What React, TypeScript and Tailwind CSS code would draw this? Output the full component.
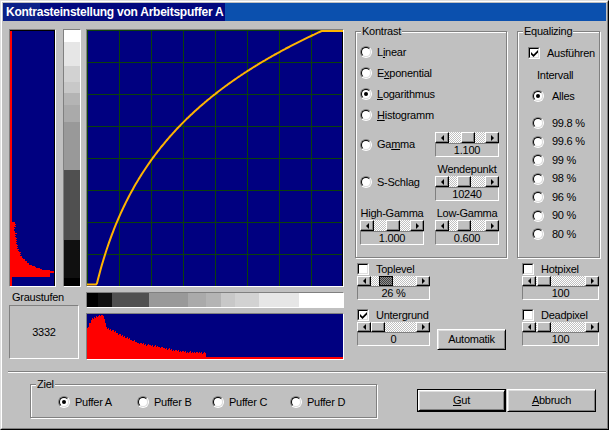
import React from "react";

const raised =
  "border border-t-white border-l-white border-r-black border-b-black shadow-[inset_-1px_-1px_0_#808080]";
const raised2 =
  "border border-t-white border-l-white border-r-black border-b-black shadow-[inset_1px_1px_0_#dfdfdf,inset_-1px_-1px_0_#808080]";
const sunken = "border border-t-[#808080] border-l-[#808080] border-r-white border-b-white";
const checker = "bg-[repeating-conic-gradient(#c0c0c0_0_25%,#ffffff_0_50%)] bg-[length:2px_2px]";

const lerp = (pts: [number, number][], x: number) => {
  for (let i = 1; i < pts.length; i++) {
    if (x <= pts[i][0]) {
      const [x0, y0] = pts[i - 1];
      const [x1, y1] = pts[i];
      return y0 + ((y1 - y0) * (x - x0)) / (x1 - x0);
    }
  }
  return pts[pts.length - 1][1];
};
const noise = (i: number) => (((i * 73 + 19) % 7) - 3) / 3;

const Radio = ({ checked }: { checked?: boolean }) => (
  <span className="flex size-3 shrink-0 rounded-full border border-t-[#808080] border-l-[#808080] border-r-white border-b-white">
    <span className="flex flex-1 items-center justify-center rounded-full border border-t-black border-l-black border-r-[#dfdfdf] border-b-[#dfdfdf] bg-white">
      {checked && <span className="size-1 rounded-full bg-black" />}
    </span>
  </span>
);

const Check = ({ checked }: { checked?: boolean }) => (
  <span className="flex size-3 shrink-0 border border-t-[#808080] border-l-[#808080] border-r-white border-b-white">
    <span className="flex flex-1 items-center justify-center border border-t-black border-l-black border-r-[#dfdfdf] border-b-[#dfdfdf] bg-white">
      {checked && (
        <svg width="7" height="7" viewBox="0 0 7 7">
          <path d="M0 2 L2.5 4.5 L7 0 L7 2.5 L2.5 7 L0 4.5Z" fill="black" />
        </svg>
      )}
    </span>
  </span>
);

const Arrow = ({ right }: { right?: boolean }) => (
  <div className={`flex w-[14px] shrink-0 items-center justify-center bg-[#c0c0c0] ${raised}`}>
    {right ? (
      <span className="h-0 w-0 border-y-[3px] border-l-[3px] border-y-transparent border-l-black" />
    ) : (
      <span className="h-0 w-0 border-y-[3px] border-r-[3px] border-y-transparent border-r-black" />
    )}
  </div>
);

const Scroll = ({ w, pre, dark, h = "h-[11px]" }: { w: string; pre: string; dark?: boolean; h?: string }) => (
  <div className={`flex ${h} ${w}`}>
    <Arrow />
    <div className={`flex flex-1 ${checker}`}>
      <div className={pre} />
      <div
        className={`w-[14px] ${
          dark
            ? "border border-black bg-[repeating-conic-gradient(#404040_0_25%,#909090_0_50%)] bg-[length:2px_2px]"
            : `bg-[#c0c0c0] ${raised}`
        }`}
      />
    </div>
    <Arrow right />
  </div>
);

const Value = ({ w, children }: { w: string; children: React.ReactNode }) => (
  <div className={`flex h-[14px] items-center justify-center ${w} ${sunken}`}>{children}</div>
);

const Group = ({ label, className, children }: { label: string; className: string; children: React.ReactNode }) => (
  <div
    className={`relative border border-[#808080] shadow-[inset_1px_1px_0_#fff,1px_1px_0_#fff] ${className}`}
  >
    <span className="absolute -top-[7px] left-[5px] bg-[#c0c0c0] px-px">{label}</span>
    {children}
  </div>
);

const Chart = () => {
  const pts: string[] = [];
  for (let x = 0; x <= 256; x++) {
    const t = (x - 9.7) / 225;
    let y = 254.5;
    if (t >= 1) y = 1;
    else if (t > 0) y = 254.5 - (Math.log(1 + 8 * t) / Math.log(9)) * 253.5;
    pts.push(`${x},${y.toFixed(1)}`);
  }
  const lines = [0, 1, 2, 3, 4, 5, 6, 7];
  return (
    <svg width="256" height="256" className="block">
      <rect width="256" height="256" fill="#000080" />
      {lines.map((k) => (
        <rect key={`v${k}`} x={k * 32} y={0} width={1} height={256} fill="#0b400b" />
      ))}
      {lines.map((k) => (
        <rect key={`h${k}`} x={0} y={k * 32} width={256} height={1} fill="#0b400b" />
      ))}
      <rect x={255} y={0} width={1} height={256} fill="#000" />
      <polyline points={pts.join(" ")} fill="none" stroke="#ffb400" strokeWidth={2} />
    </svg>
  );
};

const LeftHist = () => {
  const prof: [number, number][] = [
    [0, 2], [191, 2], [192, 5], [198, 5], [200, 4], [203, 6], [210, 6], [218, 8], [225, 11],
    [230, 15], [234, 20], [237, 26], [239, 33], [240, 40], [241, 44], [242, 45], [243, 40],
    [246, 40], [247, 2], [256, 2],
  ];
  let d = "M0 0";
  for (let y = 0; y < 256; y++) {
    let w = lerp(prof, y);
    if (y > 192 && y < 240) w += noise(y) * 0.8;
    w = Math.max(2, Math.round(w));
    d += ` L${w} ${y} L${w} ${y + 1}`;
  }
  d += " L0 256Z";
  return (
    <svg width="45" height="256" className="block">
      <rect width="45" height="256" fill="#000080" />
      <path d={d} fill="#ff0000" shapeRendering="crispEdges" />
      <rect x={0} y={0} width={45} height={1} fill="#000" />
      <rect x={44} y={0} width={1} height={256} fill="#000" />
    </svg>
  );
};

const BottomHist = () => {
  const prof: [number, number][] = [
    [0, 30], [2, 36], [5, 40], [8, 42], [12, 43], [15, 45], [17, 41], [19, 31], [22, 30],
    [26, 28], [30, 26], [35, 23], [40, 21], [48, 17], [55, 15], [68, 13], [80, 10], [91, 8],
    [100, 7], [118, 6], [119, 2], [256, 2],
  ];
  let d = "M0 45";
  for (let x = 0; x < 256; x++) {
    let h = lerp(prof, x);
    if (x < 118) h += noise(x);
    h = Math.min(44, Math.max(2, Math.round(h)));
    d += ` L${x} ${45 - h} L${x + 1} ${45 - h}`;
  }
  d += " L256 45Z";
  return (
    <svg width="256" height="45" className="block">
      <rect width="256" height="45" fill="#000080" />
      <path d={d} fill="#ff0000" shapeRendering="crispEdges" />
    </svg>
  );
};

const vLevels: [number, string][] = [
  [12, "#ffffff"], [24, "#e6e6e6"], [16, "#d2d2d2"], [11, "#c8c8c8"], [12, "#b4b4b4"],
  [17, "#aaaaaa"], [48, "#999999"], [70, "#505050"], [38, "#101010"], [8, "#000000"],
];
const hLevels: [number, string][] = [
  [11, "#000000"], [14, "#101010"], [37, "#505050"], [39, "#999999"], [18, "#aaaaaa"],
  [15, "#b4b4b4"], [14, "#c8c8c8"], [24, "#d2d2d2"], [40, "#e6e6e6"], [44, "#ffffff"],
];

const Wedge = ({ vertical }: { vertical?: boolean }) => {
  const levels = vertical ? vLevels : hLevels;
  let pos = 0;
  return (
    <svg width={vertical ? 16 : 256} height={vertical ? 256 : 14} className="block">
      {levels.map(([len, c], i) => {
        const p = pos;
        pos += len;
        return vertical ? (
          <rect key={i} x={0} y={p} width={16} height={len} fill={c} />
        ) : (
          <rect key={i} x={p} y={0} width={len} height={14} fill={c} />
        );
      })}
    </svg>
  );
};

const RadioRow = ({ checked, children, className = "" }: { checked?: boolean; children: React.ReactNode; className?: string }) => (
  <div className={`flex h-[12px] items-center gap-[5px] ${className}`}>
    <Radio checked={checked} />
    <span>{children}</span>
  </div>
);

const CheckRow = ({ checked, children, className = "" }: { checked?: boolean; children: React.ReactNode; className?: string }) => (
  <div className={`flex h-[12px] items-center gap-[7px] ${className}`}>
    <Check checked={checked} />
    <span>{children}</span>
  </div>
);

export default function App() {
  return (
    <div className="h-[430px] w-[609px] border border-t-[#dfdfdf] border-l-[#dfdfdf] border-r-black border-b-black bg-[#c0c0c0] font-['Liberation_Sans',Arial,sans-serif] text-[11px] leading-[13px] tracking-[-0.25px] text-black">
      <div className="flex h-full flex-col border border-t-white border-l-white border-r-[#808080] border-b-[#808080] p-px">
        <div className="flex h-[18px] items-center bg-[linear-gradient(to_right,#0b2188_0,#0b2188_37px,#02087e_37px,#02087e_222px,#0b50ae_222px)] pl-[3px] text-[12px] font-bold text-white">
          Kontrasteinstellung von Arbeitspuffer A
        </div>

        <div className="ml-[6px] mt-[8px] flex">
          {/* left column */}
          <div className="flex w-[72px] flex-col">
            <div className="flex gap-[7px]">
              <div className={`h-[258px] w-[47px] ${sunken}`}>
                <LeftHist />
              </div>
              <div className={`h-[258px] w-[18px] ${sunken}`}>
                <Wedge vertical />
              </div>
            </div>
            <div className="mt-[4px] pl-[3px]">Graustufen</div>
            <div className={`mt-px flex h-[54px] w-[70px] items-center justify-center ${sunken}`}>3332</div>
          </div>

          {/* chart column */}
          <div className="ml-[5px] flex w-[258px] flex-col">
            <div className={`h-[258px] ${sunken}`}>
              <Chart />
            </div>
            <div className={`mt-[5px] h-[16px] ${sunken}`}>
              <Wedge />
            </div>
            <div className={`mt-[5px] h-[47px] ${sunken}`}>
              <BottomHist />
            </div>
          </div>

          {/* controls */}
          <div className="ml-[11px] flex w-[245px] flex-col">
            <div className="mt-[2px] flex gap-[10px]">
              <Group label="Kontrast" className="h-[227px] w-[152px]">
                <div className="flex flex-col pl-[4px] pt-[14px]">
                  <RadioRow>
                    L<u>i</u>near
                  </RadioRow>
                  <RadioRow className="mt-[9px]">
                    E<u>x</u>ponential
                  </RadioRow>
                  <RadioRow checked className="mt-[9px]">
                    <u>L</u>ogarithmus
                  </RadioRow>
                  <RadioRow className="mt-[9px]">
                    <u>H</u>istogramm
                  </RadioRow>
                  <div className="mt-[11px] flex items-center">
                    <div className="w-[75px]">
                      <RadioRow>
                        Ga<u>m</u>ma
                      </RadioRow>
                    </div>
                    <div className="flex flex-col">
                      <Scroll w="w-[64px]" pre="w-[12px]" />
                      <Value w="w-[64px]">1.100</Value>
                    </div>
                  </div>
                  <div className="mt-[6px] flex items-center">
                    <div className="w-[75px]">
                      <RadioRow>S-Schlag</RadioRow>
                    </div>
                    <div className="flex flex-col">
                      <div className="text-center">Wendepunkt</div>
                      <Scroll w="w-[64px]" pre="w-[8px]" />
                      <Value w="w-[64px]">10240</Value>
                    </div>
                  </div>
                  <div className="mt-[6px] flex gap-[11px]">
                    <div className="flex flex-col">
                      <div className="text-center">High-Gamma</div>
                      <Scroll w="w-[64px]" pre="w-[12px]" />
                      <Value w="w-[64px]">1.000</Value>
                    </div>
                    <div className="flex flex-col">
                      <div className="text-center">Low-Gamma</div>
                      <Scroll w="w-[64px]" pre="w-[8px]" />
                      <Value w="w-[64px]">0.600</Value>
                    </div>
                  </div>
                </div>
              </Group>

              <Group label="Equalizing" className="h-[227px] w-[83px]">
                <div className="flex flex-col pt-[15px]">
                  <CheckRow checked className="pl-[10px] gap-[6px]">
                    Ausführen
                  </CheckRow>
                  <div className="mt-[10px] pl-[19px]">Intervall</div>
                  <div className="flex flex-col pl-[14px]">
                    <RadioRow checked className="mt-[8px] gap-[8px]">
                      Alles
                    </RadioRow>
                    <div className="mt-[15px] flex flex-col gap-[6.5px]">
                      {["99.8 %", "99.6 %", "99 %", "98 %", "96 %", "90 %", "80 %"].map((v) => (
                        <RadioRow key={v} className="gap-[8px]">
                          {v}
                        </RadioRow>
                      ))}
                    </div>
                  </div>
                </div>
              </Group>
            </div>

            <div className="ml-[2px] mt-[5px] flex">
              <div className="flex w-[73px] flex-col">
                <CheckRow>Toplevel</CheckRow>
                <div className="mt-px">
                  <Scroll w="w-[73px]" pre="w-[8px]" dark h="h-[10px]" />
                </div>
                <Value w="w-[73px]">26 %</Value>
                <CheckRow checked className="mt-[9px]">
                  Untergrund
                </CheckRow>
                <div className="mt-px">
                  <Scroll w="w-[73px]" pre="w-0" h="h-[10px]" />
                </div>
                <Value w="w-[73px]">0</Value>
              </div>
              <div className="ml-[7px] mt-[66px]">
                <button className={`flex h-[21px] w-[69px] items-center justify-center bg-[#c0c0c0] ${raised2}`}>
                  Automatik
                </button>
              </div>
              <div className="ml-[16px] flex w-[77px] flex-col">
                <CheckRow>Hotpixel</CheckRow>
                <div className="mt-px">
                  <Scroll w="w-[77px]" pre="w-px" h="h-[10px]" />
                </div>
                <Value w="w-[77px]">100</Value>
                <CheckRow className="mt-[9px]">Deadpixel</CheckRow>
                <div className="mt-px">
                  <Scroll w="w-[77px]" pre="w-px" h="h-[10px]" />
                </div>
                <Value w="w-[77px]">100</Value>
              </div>
            </div>
          </div>
        </div>

        <div className="ml-[5px] mt-[11px] h-[2px] border-t border-b border-t-[#808080] border-b-white" />

        <div className="mt-[11px] flex items-start">
          <Group label="Ziel" className="ml-[27px] h-[34px] w-[347px]">
            <div className="flex pl-[27px] pt-[11px]">
              <RadioRow checked className="w-[79px]">
                Puffer A
              </RadioRow>
              <RadioRow className="w-[75px]">Puffer B</RadioRow>
              <RadioRow className="w-[78px]">Puffer C</RadioRow>
              <RadioRow>Puffer D</RadioRow>
            </div>
          </Group>
          <div className="ml-[40px] mt-[5px] flex gap-px">
            <div className="h-[23px] w-[89px] border border-black">
              <button className={`flex h-full w-full items-center justify-center bg-[#c0c0c0] ${raised2}`}>
                <span>
                  <u>G</u>ut
                </span>
              </button>
            </div>
            <button className={`flex h-[23px] w-[89px] items-center justify-center bg-[#c0c0c0] ${raised2}`}>
              <span>
                <u>A</u>bbruch
              </span>
            </button>
          </div>
        </div>
      </div>
    </div>
  );
}
